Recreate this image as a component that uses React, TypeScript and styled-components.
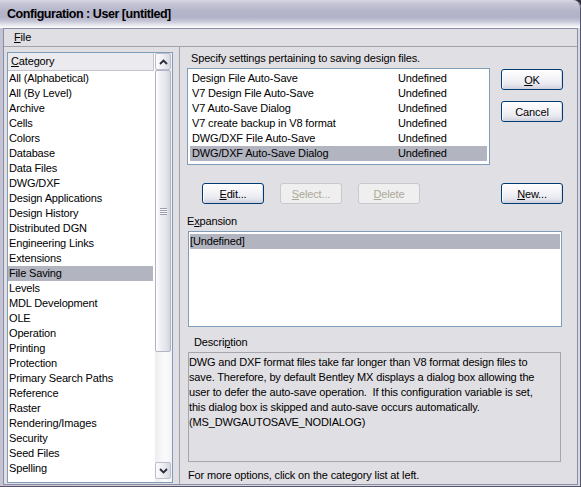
import React from "react";
import styled, { createGlobalStyle } from "styled-components";

const GlobalStyle = createGlobalStyle`
  html, body { margin: 0; padding: 0; background: #2e2e3c; }
  body {
    font-family: "Liberation Sans", Arial, sans-serif;
    font-size: 11px;
    letter-spacing: -0.15px;
    color: #000;
    overflow: hidden;
  }
  * { box-sizing: border-box; }
`;

const Window = styled.div`
  width: 581px;
  height: 487px;
  display: flex;
  flex-direction: column;
  border-radius: 0 8px 0 0;
  overflow: hidden;
  background: #d3d3df;
`;

const TitleBar = styled.div`
  height: 28px;
  flex: none;
  display: flex;
  align-items: center;
  padding-left: 7px;
  border-top-right-radius: 8px;
  border-right: 1px solid #55556a;
  background: linear-gradient(
    to bottom,
    #d8d8e4 0%,
    #c6c6d6 12%,
    #b5b5ca 40%,
    #b1b1c7 60%,
    #c4c4d5 75%,
    #e4e4ed 88%,
    #ffffff 100%
  );
`;

const Title = styled.span`
  font-family: "Liberation Sans", Arial, sans-serif;
  font-weight: bold;
  font-size: 12.5px;
  letter-spacing: -0.45px;
  color: #000;
`;

const Frame = styled.div`
  flex: 1;
  min-height: 0;
  display: flex;
  padding: 0 2px 1px 3px;
  background: linear-gradient(to right, #c3c3d3, #d9d9e4 40%, #d9d9e4);
  border-right: 1px solid #55556a;
  border-bottom: 1px solid #55556a;
`;

const Client = styled.div`
  flex: 1;
  min-width: 0;
  display: flex;
  flex-direction: column;
  background: #e0dfe3;
  border: 1px solid #8c8ca4;
`;

const MenuBar = styled.div`
  height: 18px;
  flex: none;
  display: flex;
  align-items: center;
  padding-left: 10px;
  border-bottom: 1px solid #a4a3aa;
`;

const MenuItem = styled.span`
  line-height: 15px;
`;

const Key = styled.span`
  text-decoration: underline;
  text-underline-offset: 1px;
`;

const Body = styled.div`
  flex: 1;
  min-height: 0;
  display: flex;
`;

const LeftPane = styled.div`
  width: 176px;
  flex: none;
  padding: 5px 0 0 3px;
  border-right: 1px solid #a3a3ab;
`;

const CategoryList = styled.div`
  width: 166px;
  height: 431px;
  display: flex;
  background: #fff;
  border: 1px solid #7f9db9;
`;

const ListColumn = styled.div`
  width: 147px;
  flex: none;
  display: flex;
  flex-direction: column;
  overflow: hidden;
`;

const ListHeader = styled.div`
  height: 18px;
  line-height: 17px;
  padding-left: 3px;
  margin-right: 1px;
  background: #ebeaee;
  border-bottom: 1px solid #c4c3cc;
  border-right: 1px solid #c4c3cc;
`;

const CategoryItem = styled.div<{ $selected?: boolean }>`
  height: 15px;
  line-height: 15px;
  padding-left: 1px;
  margin-right: 2px;
  white-space: nowrap;
  background: ${(p) => (p.$selected ? "#b2b4bf" : "transparent")};
`;

const ScrollBar = styled.div`
  width: 17px;
  flex: none;
  display: flex;
  flex-direction: column;
  padding-bottom: 3px;
  background: linear-gradient(to right, #eeeef2, #fbfbfc 60%, #f2f2f5);
`;

const ScrollButton = styled.div`
  height: 17px;
  flex: none;
  margin: 0 1px 0 0;
  display: flex;
  align-items: center;
  justify-content: center;
  border: 1px solid #bcbdcc;
  border-radius: 2px;
  background: linear-gradient(to right, #fdfdfe, #e9e9f0 60%, #d8d8e3);
`;

const Thumb = styled.div<{ $size: number }>`
  height: ${(p) => p.$size}px;
  flex: none;
  margin: 0 1px 0 0;
  display: flex;
  align-items: center;
  justify-content: center;
  border: 1px solid #b3b4c6;
  border-radius: 2px;
  background: linear-gradient(to right, #ffffff, #f0f0f5 30%, #e2e2ea 75%, #d3d3de);
`;

const Grip = styled.div`
  width: 7px;
  height: 7px;
  background: repeating-linear-gradient(
    to bottom,
    #9b9cae 0px,
    #9b9cae 1px,
    #fbfbfd 1px,
    #fbfbfd 2px
  );
`;

const Track = styled.div`
  flex: 1;
`;

const RightPane = styled.div`
  flex: 1;
  min-width: 0;
  display: flex;
  flex-direction: column;
  padding: 4px 14px 0 7px;
`;

const Caption = styled.div`
  line-height: 15px;
  padding-left: 4px;
  margin-bottom: 2px;
  white-space: nowrap;
`;

const TopRow = styled.div`
  display: flex;
  gap: 11px;
  height: 97px;
`;

const VarList = styled.div`
  width: 303px;
  height: 97px;
  padding: 2px;
  background: #fff;
  border: 1px solid #7f9db9;
`;

const VarRow = styled.div<{ $selected?: boolean }>`
  display: grid;
  grid-template-columns: 206px 1fr;
  height: 15px;
  line-height: 15px;
  padding-left: 2px;
  white-space: nowrap;
  background: ${(p) => (p.$selected ? "#b2b4bf" : "transparent")};
`;

const ButtonColumn = styled.div`
  display: flex;
  flex-direction: column;
  gap: 11px;
  padding-top: 1px;
`;

const Button = styled.div<{ $disabled?: boolean; $push?: boolean }>`
  width: 62px;
  height: 21px;
  flex: none;
  display: flex;
  align-items: center;
  justify-content: center;
  border-radius: 3px;
  margin-left: ${(p) => (p.$push ? "auto" : "0")};
  border: 1px solid ${(p) => (p.$disabled ? "#c9c8cc" : "#003c74")};
  color: ${(p) => (p.$disabled ? "#aca899" : "#000")};
  background: ${(p) =>
    p.$disabled
      ? "#efefef"
      : "linear-gradient(to bottom, #ffffff 0%, #f6f6f9 35%, #e8e8f0 75%, #d0d0de 100%)"};
  box-shadow: ${(p) =>
    p.$disabled ? "none" : "inset 1px 0 0 #ffffff, inset -1px 0 0 #dcdce6"};
`;

const ActionRow = styled.div`
  display: flex;
  gap: 16px;
  margin-top: 18px;
  padding-left: 15px;
`;

const FieldLabel = styled.div<{ $indent?: number }>`
  line-height: 15px;
  padding-left: ${(p) => p.$indent ?? 0}px;
  margin-top: ${(p) => (p.$indent ? 8 : 10)}px;
  margin-bottom: 2px;
`;

const ExpansionBox = styled.div`
  width: 374px;
  height: 96px;
  margin-left: 1px;
  padding: 2px 1px;
  background: #fff;
  border: 1px solid #7f9db9;
`;

const ExpRow = styled.div`
  height: 15px;
  line-height: 15px;
  background: #b2b4bf;
`;

const DescriptionBox = styled.div`
  width: 373px;
  height: 110px;
  margin-left: 1px;
  padding: 2px 0 0 0;
  border: 1px solid #a6a5ab;
  background: #e0dfe3;
`;

const DescLine = styled.div`
  line-height: 15px;
  white-space: pre;
`;

const Footer = styled.div`
  margin-top: 6px;
  padding-left: 1px;
  line-height: 15px;
  white-space: nowrap;
`;

const Chevron = ({ up }: { up?: boolean }) => (
  <svg width="9" height="6" viewBox="0 0 9 6">
    <polyline
      points={up ? "1,5 4.5,1.5 8,5" : "1,1 4.5,4.5 8,1"}
      fill="none"
      stroke="#2b2b3a"
      strokeWidth="1.8"
    />
  </svg>
);

const categories = [
  "All (Alphabetical)",
  "All (By Level)",
  "Archive",
  "Cells",
  "Colors",
  "Database",
  "Data Files",
  "DWG/DXF",
  "Design Applications",
  "Design History",
  "Distributed DGN",
  "Engineering Links",
  "Extensions",
  "File Saving",
  "Levels",
  "MDL Development",
  "OLE",
  "Operation",
  "Printing",
  "Protection",
  "Primary Search Paths",
  "Reference",
  "Raster",
  "Rendering/Images",
  "Security",
  "Seed Files",
  "Spelling",
];

const variables = [
  "Design File Auto-Save",
  "V7 Design File Auto-Save",
  "V7 Auto-Save Dialog",
  "V7 create backup in V8 format",
  "DWG/DXF File Auto-Save",
  "DWG/DXF Auto-Save Dialog",
];

const description = [
  "DWG and DXF format files take far longer than V8 format design files to",
  "save. Therefore, by default Bentley MX displays a dialog box allowing the",
  "user to defer the auto-save operation.  If this configuration variable is set,",
  "this dialog box is skipped and auto-save occurs automatically.",
  "(MS_DWGAUTOSAVE_NODIALOG)",
];

export default function App() {
  return (
    <>
      <GlobalStyle />
      <Window>
        <TitleBar>
          <Title>Configuration : User [untitled]</Title>
        </TitleBar>
        <Frame>
          <Client>
            <MenuBar>
              <MenuItem>
                <Key>F</Key>ile
              </MenuItem>
            </MenuBar>
            <Body>
              <LeftPane>
                <CategoryList>
                  <ListColumn>
                    <ListHeader>
                      <Key>C</Key>ategory
                    </ListHeader>
                    {categories.map((c) => (
                      <CategoryItem key={c} $selected={c === "File Saving"}>
                        {c}
                      </CategoryItem>
                    ))}
                  </ListColumn>
                  <ScrollBar>
                    <ScrollButton>
                      <Chevron up />
                    </ScrollButton>
                    <Thumb $size={282}>
                      <Grip />
                    </Thumb>
                    <Track />
                    <ScrollButton>
                      <Chevron />
                    </ScrollButton>
                  </ScrollBar>
                </CategoryList>
              </LeftPane>
              <RightPane>
                <Caption>Specify settings pertaining to saving design files.</Caption>
                <TopRow>
                  <VarList>
                    {variables.map((v) => (
                      <VarRow key={v} $selected={v === "DWG/DXF Auto-Save Dialog"}>
                        <span>{v}</span>
                        <span>Undefined</span>
                      </VarRow>
                    ))}
                  </VarList>
                  <ButtonColumn>
                    <Button>
                      <Key>O</Key>K
                    </Button>
                    <Button>Cancel</Button>
                  </ButtonColumn>
                </TopRow>
                <ActionRow>
                  <Button>
                    <Key>E</Key>dit...
                  </Button>
                  <Button $disabled>
                    <Key>S</Key>elect...
                  </Button>
                  <Button $disabled>
                    <Key>D</Key>elete
                  </Button>
                  <Button $push>
                    <Key>N</Key>ew...
                  </Button>
                </ActionRow>
                <FieldLabel>
                  E<Key>x</Key>pansion
                </FieldLabel>
                <ExpansionBox>
                  <ExpRow>[Undefined]</ExpRow>
                </ExpansionBox>
                <FieldLabel $indent={7}>
                  Descri<Key>p</Key>tion
                </FieldLabel>
                <DescriptionBox>
                  {description.map((l, i) => (
                    <DescLine key={i}>{l}</DescLine>
                  ))}
                </DescriptionBox>
                <Footer>For more options, click on the category list at left.</Footer>
              </RightPane>
            </Body>
          </Client>
        </Frame>
      </Window>
    </>
  );
}
